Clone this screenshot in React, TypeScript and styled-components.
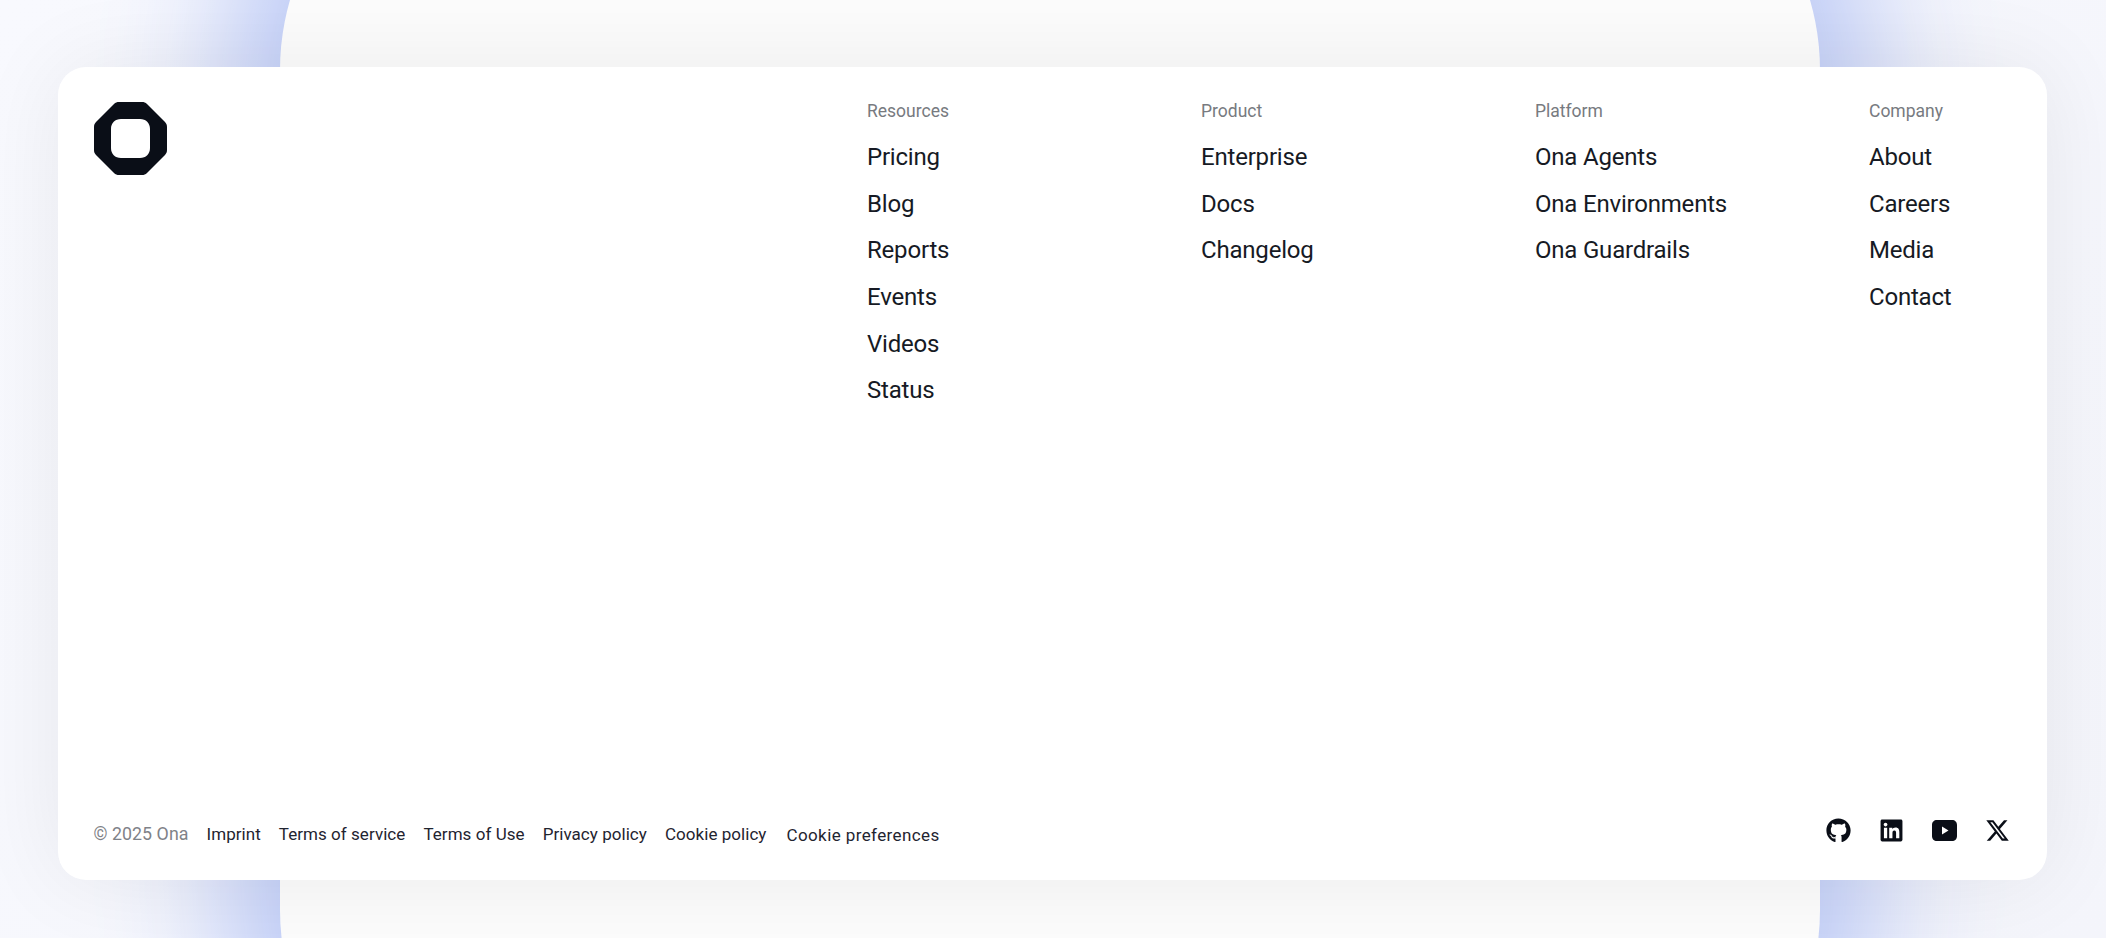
import React from 'react';
import styled, { createGlobalStyle } from 'styled-components';
import { FaGithub, FaLinkedin, FaXTwitter } from 'react-icons/fa6';

const GlobalStyle = createGlobalStyle`
  html, body {
    margin: 0;
    padding: 0;
    background: #f7f8fd;
  }
  * {
    box-sizing: border-box;
  }
`;

const Page = styled.div`
  position: relative;
  height: 938px;
  overflow: hidden;
  padding: 67px 59px 58px 58px;
  background: linear-gradient(135deg, #f8f9fe 0%, #f4f5fb 100%);
  font-family: Roboto, 'Liberation Sans', sans-serif;
`;

const BackPanel = styled.div`
  position: absolute;
  top: -180px;
  left: 280px;
  width: 1540px;
  height: 1340px;
  border-radius: 250px;
  background: #fcfcfc;
  box-shadow: 0 0 130px 50px #bac8f6;
`;

const Card = styled.footer`
  position: relative;
  z-index: 1;
  display: flex;
  flex-direction: column;
  justify-content: space-between;
  height: 813px;
  padding: 35px 37px 33.5px 35.5px;
  background: #ffffff;
  border-radius: 28px;
  box-shadow: 0 0 90px rgba(10, 10, 30, 0.07);
`;

const TopRow = styled.div`
  display: grid;
  grid-template-columns: 773.5px repeat(3, 334px) auto;
`;

const Column = styled.nav`
  display: flex;
  flex-direction: column;
`;

const ColumnTitle = styled.div`
  height: 19px;
  margin-bottom: 12.9px;
  font-size: 17.5px;
  line-height: 19px;
  color: #777a80;
`;

const NavLink = styled.a`
  height: 46.67px;
  font-size: 24px;
  line-height: 46.67px;
  letter-spacing: -0.2px;
  color: #161a24;
`;

const BottomRow = styled.div`
  display: flex;
  justify-content: space-between;
  align-items: flex-end;
`;

const LegalList = styled.div`
  display: flex;
  gap: 18px;
  font-size: 17px;
  line-height: 24px;
  letter-spacing: 0.05px;
`;

const Copyright = styled.span`
  font-size: 17.8px;
  color: #7f8288;
`;

const LegalLink = styled.a`
  color: #1f2430;

  &:last-child {
    margin-left: 2px;
    padding-top: 1px;
    letter-spacing: 0.4px;
  }
`;

const SocialList = styled.div`
  display: flex;
  align-items: center;
  gap: 28px;
  padding-bottom: 4px;
  color: #0a0e17;
`;

const columns = [
  { title: 'Resources', links: ['Pricing', 'Blog', 'Reports', 'Events', 'Videos', 'Status'] },
  { title: 'Product', links: ['Enterprise', 'Docs', 'Changelog'] },
  { title: 'Platform', links: ['Ona Agents', 'Ona Environments', 'Ona Guardrails'] },
  { title: 'Company', links: ['About', 'Careers', 'Media', 'Contact'] },
];

const legal = ['Imprint', 'Terms of service', 'Terms of Use', 'Privacy policy', 'Cookie policy', 'Cookie preferences'];

const Logo = () => (
  <svg width="73" height="73" viewBox="0 0 73 73" fill="none">
    <path
      fillRule="evenodd"
      clipRule="evenodd"
      fill="#0a0e17"
      d="M25 0H48C50 0 51.5 .6 53 2L71 20C72.4 21.5 73 23 73 25V48C73 50 72.4 51.5 71 53L53 71C51.5 72.4 50 73 48 73H25C23 73 21.5 72.4 20 71L2 53C.6 51.5 0 50 0 48V25C0 23 .6 21.5 2 20L20 2C21.5 .6 23 0 25 0ZM27 17C21 17 17 21 17 27V46C17 52 21 56 27 56H46C52 56 56 52 56 46V27C56 21 52 17 46 17Z"
    />
  </svg>
);

const YoutubeIcon = () => (
  <svg width="25" height="21" viewBox="0 0 25 21" fill="none">
    <path
      fillRule="evenodd"
      clipRule="evenodd"
      fill="currentColor"
      d="M5 0H20C23 0 25 2 25 5V16C25 19 23 21 20 21H5C2 21 0 19 0 16V5C0 2 2 0 5 0ZM10 6.5V14.5L16.5 10.5Z"
    />
  </svg>
);

const App: React.FC = () => {
  return (
    <Page>
      <GlobalStyle />
      <BackPanel />
      <Card>
        <TopRow>
          <Logo />
          {columns.map(col => (
            <Column key={col.title}>
              <ColumnTitle>{col.title}</ColumnTitle>
              {col.links.map(link => (
                <NavLink key={link}>{link}</NavLink>
              ))}
            </Column>
          ))}
        </TopRow>
        <BottomRow>
          <LegalList>
            <Copyright>© 2025 Ona</Copyright>
            {legal.map(item => (
              <LegalLink key={item}>{item}</LegalLink>
            ))}
          </LegalList>
          <SocialList>
            <FaGithub size={25} />
            <FaLinkedin size={25} />
            <YoutubeIcon />
            <FaXTwitter size={25} />
          </SocialList>
        </BottomRow>
      </Card>
    </Page>
  );
};

export default App;
